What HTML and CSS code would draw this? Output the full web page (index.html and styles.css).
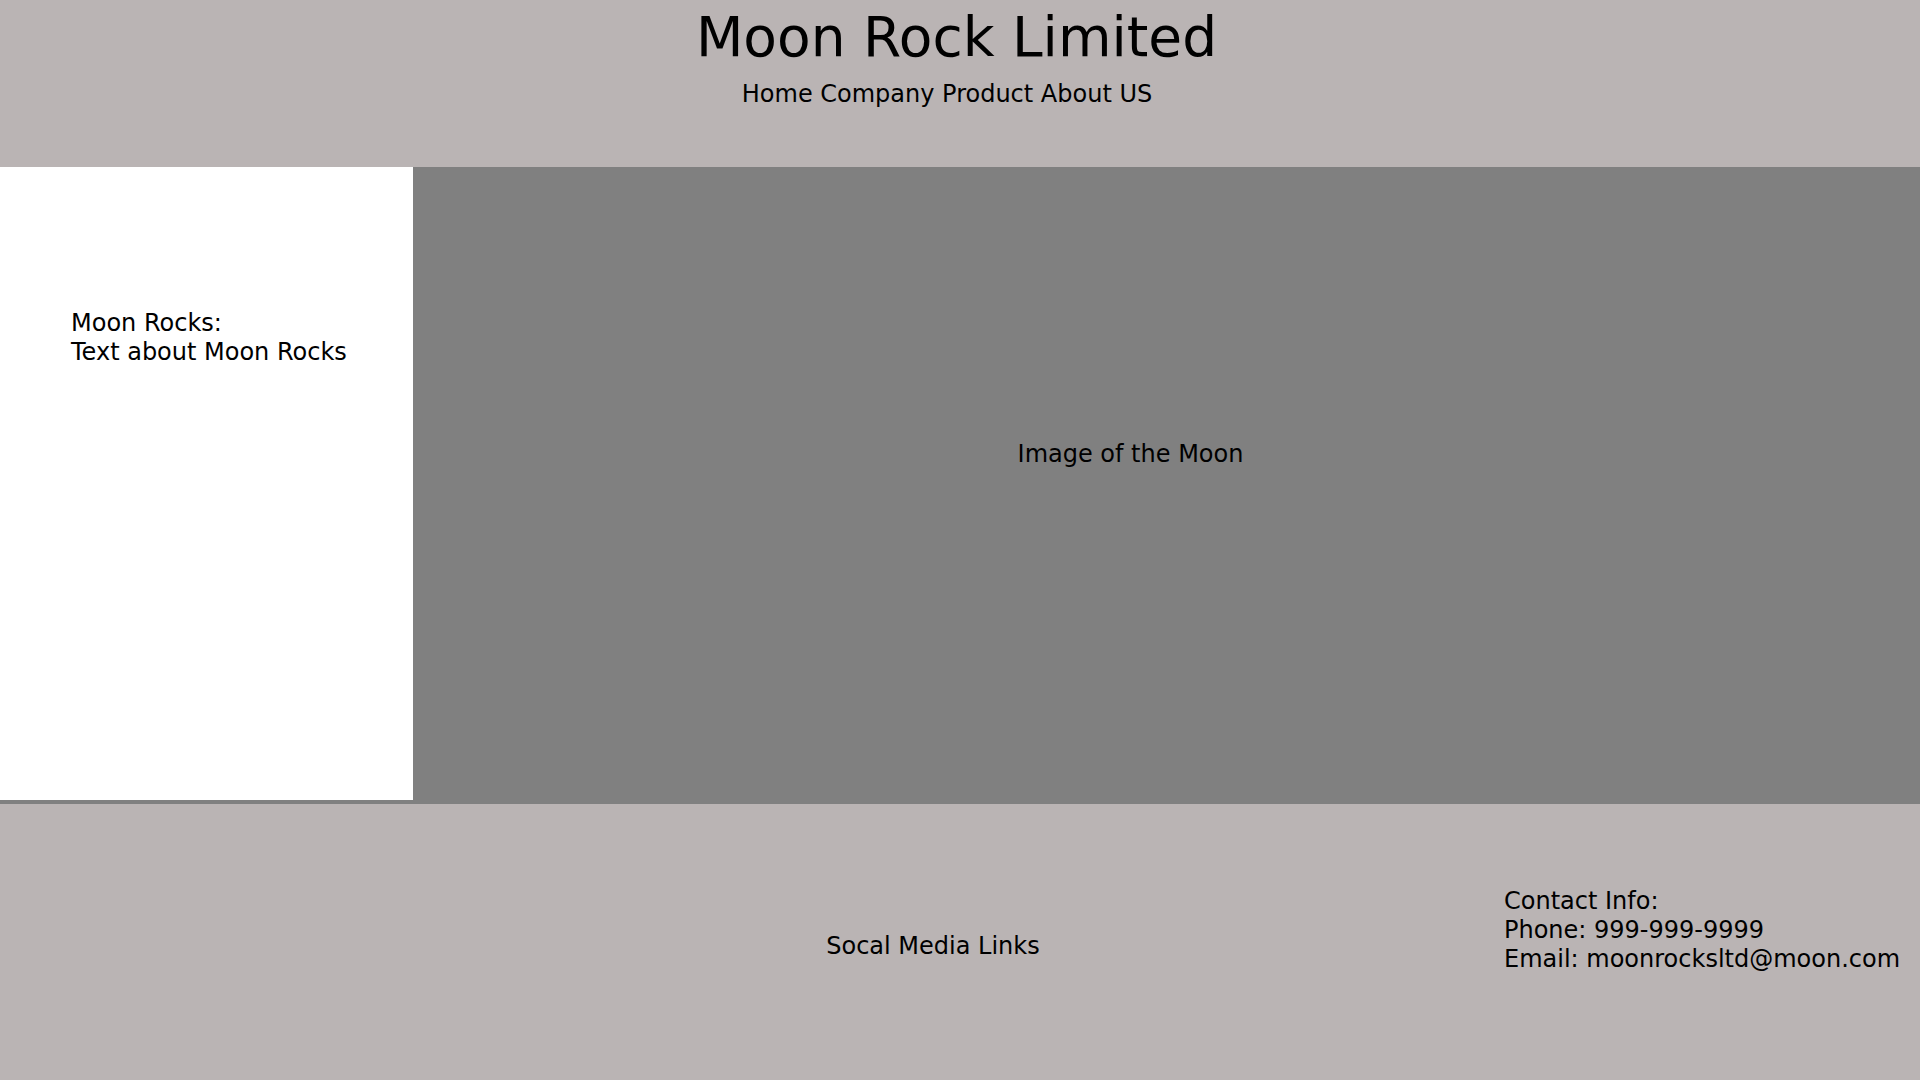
FILE: index.html
```html
<!DOCTYPE html>
<html lang="en">
<head>
<meta charset="utf-8">
<title>Moon Rock Limited</title>
<link rel="stylesheet" href="styles.css">
</head>
<body>
<header class="site-header">
  <h1 class="site-title">Moon Rock Limited</h1>
  <nav class="site-nav">Home Company Product About US</nav>
</header>
<div class="content">
  <aside class="sidebar">
    <p class="sidebar-text">Moon Rocks:<br>Text about Moon Rocks</p>
  </aside>
  <section class="hero">
    <p class="hero-text">Image of the Moon</p>
  </section>
</div>
<footer class="site-footer">
  <div class="social">Socal Media Links</div>
  <div class="contact">Contact Info:<br>Phone: 999-999-9999<br>Email: moonrocksltd@moon.com</div>
</footer>
</body>
</html>
```
FILE: styles.css
```css
html, body {
  margin: 0;
  padding: 0;
}
body {
  font-family: "DejaVu Sans", sans-serif;
  font-size: 24px;
  color: #000;
  width: 1920px;
  height: 1080px;
  overflow: hidden;
}
.site-header {
  background: #bab4b4;
  height: 167px;
  text-align: center;
  box-sizing: border-box;
  padding-top: 5px;
}
.site-title {
  margin: 0;
  padding-right: 7px;
  font-size: 55px;
  font-weight: normal;
  line-height: 64px;
}
.site-nav {
  margin-top: 11px;
  padding-right: 26px;
  line-height: 28px;
}
.content {
  display: flex;
  align-items: flex-start;
  background: #808080;
  height: 637px;
}
.sidebar {
  width: 413px;
  height: 633px;
  background: #ffffff;
  box-sizing: border-box;
  padding: 142px 0 0 71px;
}
.sidebar-text {
  margin: 0;
  line-height: 29px;
}
.hero {
  flex: 1;
  height: 100%;
  box-sizing: border-box;
  padding: 273px 72px 0 0;
  text-align: center;
}
.hero-text {
  margin: 0;
  line-height: 28px;
}
.site-footer {
  background: #bab4b4;
  height: 276px;
  display: flex;
  align-items: flex-start;
}
.social {
  flex: 1;
  text-align: center;
  padding: 128px 0 0 362px;
  line-height: 28px;
}
.contact {
  width: 416px;
  padding-top: 83px;
  line-height: 29px;
}
```
